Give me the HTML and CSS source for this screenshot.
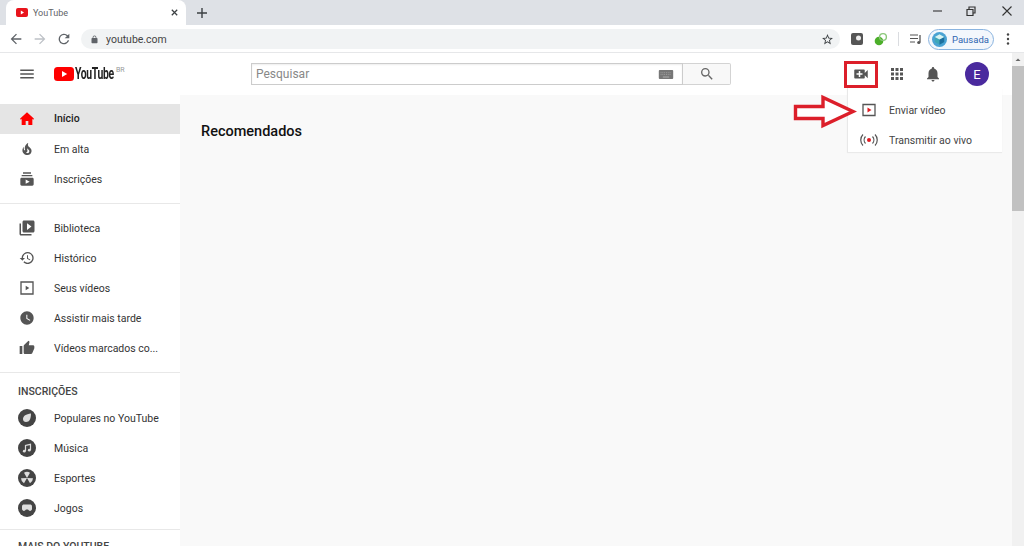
FILE: index.html
```html
<!DOCTYPE html>
<html lang="pt-BR">
<head>
<meta charset="utf-8">
<title>YouTube</title>
<link rel="stylesheet" href="styles.css">
</head>
<body>
<div class="browser">
  <div class="tabstrip">
    <div class="tab">
      <svg class="favicon" viewBox="0 0 12 9"><rect width="12" height="9" rx="2" fill="#e8141c"/><path d="M4.800 2.400 8 4.500 4.800 6.600z" fill="#fff"/></svg>
      <span class="tab-title">YouTube</span>
      <svg class="tab-close" viewBox="0 0 10 10"><path d="M2 2l6 6M8 2 2 8" stroke="#3c4043" stroke-width="1.400"/></svg>
    </div>
    <svg class="new-tab" viewBox="0 0 10 10"><path d="M5 0v10M0 5h10" stroke="#3c4043" stroke-width="1.400"/></svg>
    <div class="win-controls">
      <svg class="win-btn" viewBox="0 0 12 12"><path d="M1 6h9" stroke="#333" stroke-width="1.100"/></svg>
      <svg class="win-btn" viewBox="0 0 12 12"><path d="M2 4.500h6v6H2zM4 4.500V2h6v6H8" fill="none" stroke="#333" stroke-width="1.200"/></svg>
      <svg class="win-btn win-close" viewBox="0 0 12 12"><path d="M1.500 1.500l9 9M10.500 1.500l-9 9" stroke="#333" stroke-width="1.100"/></svg>
    </div>
  </div>
  <div class="toolbar">
    <svg class="nav-icon" viewBox="0 0 24 24"><path d="M20 11H7.800l5.600-5.600L12 4l-8 8 8 8 1.400-1.400L7.800 13H20z" fill="#5f6368"/></svg>
    <svg class="nav-icon" viewBox="0 0 24 24"><path d="M4 11h12.200l-5.600-5.600L12 4l8 8-8 8-1.400-1.400 5.600-5.600H4z" fill="#bdc1c6"/></svg>
    <svg class="nav-icon" viewBox="0 0 24 24"><path d="M17.650 6.350A8 8 0 1 0 19.730 14h-2.080A6 6 0 1 1 12 6c1.660 0 3.140.69 4.220 1.780L13 11h7V4z" fill="#5f6368"/></svg>
    <div class="omnibox">
      <svg class="lock" viewBox="0 0 24 24"><path d="M18 8h-1V6a5 5 0 0 0-10 0v2H6a2 2 0 0 0-2 2v10c0 1.100.9 2 2 2h12a2 2 0 0 0 2-2V10a2 2 0 0 0-2-2zM9 6a3 3 0 0 1 6 0v2H9z" fill="#5f6368"/></svg>
      <span class="url">youtube.com</span>
      <svg class="star" viewBox="0 0 24 24"><path d="M22 9.240l-7.190-.62L12 2 9.190 8.630 2 9.240l5.460 4.730L5.820 21 12 17.270 18.180 21l-1.630-7.030zM12 15.400l-3.760 2.270 1-4.280-3.320-2.880 4.380-.38L12 6.100l1.710 4.040 4.380.38-3.320 2.880 1 4.280z" fill="#3c4043"/></svg>
    </div>
    <div class="extensions">
      <svg class="ext" viewBox="0 0 14 14"><rect x="1" y="1" width="12" height="12" rx="2" fill="#555"/><circle cx="8.500" cy="6" r="2.500" fill="#eee"/></svg>
      <svg class="ext" viewBox="0 0 14 14"><circle cx="5" cy="9" r="4.300" fill="#4caf2a"/><circle cx="9" cy="5" r="3.400" fill="none" stroke="#8bc77a" stroke-width="1.400"/></svg>
      <span class="tb-sep"></span>
      <svg class="ext" viewBox="0 0 14 14"><path d="M1 3h8M1 6.500h8M1 10h5" stroke="#555" stroke-width="1.200"/><path d="M11 3v7.500" stroke="#555" stroke-width="1.300"/><circle cx="9.800" cy="10.500" r="1.600" fill="#555"/></svg>
    </div>
    <div class="profile-chip">
      <svg class="cube" viewBox="0 0 16 16"><circle cx="8" cy="8" r="8" fill="#4aa3d4"/><path d="M8 2.500l5 2.800v5.400l-5 2.800-5-2.800V5.300z" fill="#3fa7b8"/><path d="M8 8v5.500l5-2.800V5.300z" fill="#1d6f9e"/><path d="M8 2.500l5 2.800L8 8 3 5.300z" fill="#d8f3f3"/></svg>
      <span class="chip-label">Pausada</span>
    </div>
    <svg class="menu-dots" viewBox="0 0 4 14"><circle cx="2" cy="2.500" r="1.200" fill="#444"/><circle cx="2" cy="7" r="1.200" fill="#444"/><circle cx="2" cy="11.500" r="1.200" fill="#444"/></svg>
  </div>
</div>

<div class="page">
  <div class="app">
    <header class="masthead">
      <div class="mast-left">
        <svg class="mast-icon" viewBox="0 0 24 24"><path d="M3 6h18v2H3zM3 11h18v2H3zM3 16h18v2H3z" fill="#555"/></svg>
        <div class="logo">
          <svg class="logo-mark" viewBox="0 0 20 14"><rect width="20" height="14" rx="3.500" fill="#f00"/><path d="M8 4l5.200 3L8 10z" fill="#fff"/></svg>
          <span class="logo-text">YouTube</span>
          <span class="logo-br">BR</span>
        </div>
      </div>
      <div class="search">
        <div class="search-input">
          <span class="placeholder">Pesquisar</span>
          <svg class="keyboard" viewBox="0 0 16 10"><rect width="16" height="10" rx="1" fill="#777"/><path d="M2 3h12M2 5h12" stroke="#aaa" stroke-width=".8" stroke-dasharray="1 1"/><path d="M4.500 7.800h7" stroke="#bbb" stroke-width=".9"/></svg>
        </div>
        <div class="search-btn">
          <svg class="search-icon" viewBox="0 0 24 24"><path d="M15.500 14h-.79l-.28-.27A6.470 6.470 0 0 0 16 9.500 6.500 6.500 0 1 0 9.500 16c1.610 0 3.090-.59 4.230-1.570l.27.28v.79l5 4.990L20.490 19zm-6 0a4.500 4.500 0 1 1 0-9 4.500 4.500 0 0 1 0 9z" fill="#666"/></svg>
        </div>
      </div>
      <div class="mast-right">
        <svg class="mast-icon" viewBox="0 0 24 24"><path d="M17 10.500V7c0-.55-.45-1-1-1H4c-.55 0-1 .45-1 1v10c0 .55.45 1 1 1h12c.55 0 1-.45 1-1v-3.500l4 4v-11l-4 4zM14 13h-3v3H9v-3H6v-2h3V8h2v3h3v2z" fill="#555"/></svg>
        <svg class="mast-icon" viewBox="0 0 24 24"><path d="M4 8h4V4H4zm6 12h4v-4h-4zm-6 0h4v-4H4zm0-6h4v-4H4zm6 0h4v-4h-4zm6-10v4h4V4zm-6 4h4V4h-4zm6 6h4v-4h-4zm0 6h4v-4h-4z" fill="#555"/></svg>
        <svg class="mast-icon" viewBox="0 0 24 24"><path d="M12 22c1.100 0 2-.9 2-2h-4c0 1.100.89 2 2 2zm6-6v-5c0-3.070-1.640-5.640-4.500-6.320V4c0-.83-.67-1.500-1.500-1.500s-1.500.67-1.500 1.500v.68C7.630 5.360 6 7.920 6 11v5l-2 2v1h16v-1l-2-2z" fill="#555"/></svg>
        <div class="avatar">E</div>
      </div>
    </header>
    <div class="body-row">
      <nav class="sidebar">
        <section class="side-section">
          <a class="side-item active"><svg class="side-icon" viewBox="0 0 24 24"><path d="M4 10v11h6v-6h4v6h6V10l-8-7z" fill="#f00"/><path d="M1.500 11.500 12 2l10.500 9.500-1.300 1.500L12 4.800 2.800 13z" fill="#f00"/></svg><span class="side-label">Início</span></a>
          <a class="side-item"><svg class="side-icon" viewBox="0 0 24 24"><path d="M17.530 11.200c-.23-.3-.5-.56-.76-.82-.65-.6-1.400-1.030-2.030-1.660C13.300 7.260 13 4.850 13.910 3c-.91.23-1.750.75-2.450 1.320-2.540 2.080-3.540 5.750-2.340 8.900.04.1.08.2.08.33 0 .22-.15.42-.35.5-.22.1-.46.04-.64-.12-.06-.05-.1-.1-.15-.17-1.100-1.430-1.280-3.480-.53-5.120C5.890 10 5 12.300 5.140 14.470c.04.5.1 1 .27 1.500.14.6.4 1.200.72 1.730 1.040 1.730 2.870 2.970 4.840 3.220 2.100.27 4.350-.12 5.960-1.600 1.800-1.660 2.450-4.320 1.500-6.600l-.13-.26c-.2-.46-.47-.87-.8-1.250zM14.500 17.500c-.28.24-.73.5-1.080.6-1.100.4-2.200-.16-2.870-.82 1.190-.28 1.890-1.160 2.090-2.050.17-.8-.14-1.460-.27-2.230-.12-.74-.1-1.370.17-2.060.19.38.39.76.63 1.060.77 1 1.980 1.440 2.240 2.800.04.14.06.28.06.43.03.82-.33 1.720-.97 2.270z" fill="#555"/></svg><span class="side-label">Em alta</span></a>
          <a class="side-item"><svg class="side-icon" viewBox="0 0 24 24"><path d="M20 8H4V6h16v2zm-2-6H6v2h12V2zm4 10v8c0 1.100-.9 2-2 2H4c-1.100 0-2-.9-2-2v-8c0-1.100.9-2 2-2h16c1.100 0 2 .9 2 2zm-6 4l-6-3.270v6.530L16 16z" fill="#555"/></svg><span class="side-label">Inscrições</span></a>
        </section>
        <section class="side-section">
          <a class="side-item"><svg class="side-icon large" viewBox="0 0 24 24"><path d="M4 6H2v14c0 1.100.9 2 2 2h14v-2H4V6zm16-4H8c-1.100 0-2 .9-2 2v12c0 1.100.9 2 2 2h12c1.100 0 2-.9 2-2V4c0-1.100-.9-2-2-2zm-8 12.500v-9l6 4.500-6 4.500z" fill="#555"/></svg><span class="side-label">Biblioteca</span></a>
          <a class="side-item"><svg class="side-icon" viewBox="0 0 24 24"><path d="M13 3c-4.970 0-9 4.030-9 9H1l3.890 3.890.07.14L9 12H6c0-3.870 3.130-7 7-7s7 3.130 7 7-3.130 7-7 7c-1.930 0-3.680-.79-4.940-2.060l-1.420 1.420C8.270 19.990 10.510 21 13 21c4.970 0 9-4.030 9-9s-4.030-9-9-9zm-1 5v5l4.280 2.540.72-1.210-3.500-2.080V8H12z" fill="#555"/></svg><span class="side-label">Histórico</span></a>
          <a class="side-item"><svg class="side-icon" viewBox="0 0 24 24"><path d="M3 3h18v18H3z" fill="none" stroke="#555" stroke-width="2"/><path d="M10 8.500v7l5.500-3.500z" fill="#555"/></svg><span class="side-label">Seus vídeos</span></a>
          <a class="side-item"><svg class="side-icon" viewBox="0 0 24 24"><path d="M12 2C6.500 2 2 6.500 2 12s4.500 10 10 10 10-4.500 10-10S17.500 2 12 2zm4.200 14.200L11 13V7h1.500v5.200l4.500 2.700-.8 1.300z" fill="#555"/></svg><span class="side-label">Assistir mais tarde</span></a>
          <a class="side-item"><svg class="side-icon" viewBox="0 0 24 24"><path d="M1 21h4V9H1v12zm22-11c0-1.100-.9-2-2-2h-6.310l.95-4.570.03-.32c0-.41-.17-.79-.44-1.060L14.170 1 7.590 7.590C7.220 7.950 7 8.450 7 9v10c0 1.100.9 2 2 2h9c.83 0 1.540-.5 1.840-1.220l3.020-7.050c.09-.23.14-.47.14-.73v-2z" fill="#555"/></svg><span class="side-label">Vídeos marcados co...</span></a>
        </section>
        <section class="side-section subs">
          <h3 class="side-heading">INSCRIÇÕES</h3>
          <a class="side-item"><svg class="side-icon large" viewBox="0 0 18 18"><circle cx="9" cy="9" r="9" fill="#444"/><path d="M5 10c0-3 3-5 8-5.500 0 5-1.500 8.500-5 8.500-1.800 0-3-1.200-3-3z" fill="#ddd"/></svg><span class="side-label">Populares no YouTube</span></a>
          <a class="side-item"><svg class="side-icon large" viewBox="0 0 18 18"><circle cx="9" cy="9" r="9" fill="#444"/><path d="M7.500 12V6.500l5-1.200V11" fill="none" stroke="#ddd" stroke-width="1.200"/><circle cx="6.300" cy="12.200" r="1.400" fill="#ddd"/><circle cx="11.300" cy="11.200" r="1.400" fill="#ddd"/></svg><span class="side-label">Música</span></a>
          <a class="side-item"><svg class="side-icon large" viewBox="0 0 18 18"><circle cx="9" cy="9" r="9" fill="#444"/><path d="M9 9 6 3.700a6 6 0 0 1 6 0zM9 9l6 .3a6 6 0 0 1-3 5zM9 9l-3 5.300a6 6 0 0 1-3-5z" fill="#ddd"/></svg><span class="side-label">Esportes</span></a>
          <a class="side-item"><svg class="side-icon large" viewBox="0 0 18 18"><circle cx="9" cy="9" r="9" fill="#444"/><path d="M4 7.500C4 6 5 5.500 6 5.500h6c1 0 2 .5 2 2V10c0 1.500-2 2.500-3 1.500L10 10.500H8L7 11.500C6 12.500 4 11.500 4 10z" fill="#ddd"/></svg><span class="side-label">Jogos</span></a>
        </section>
        <section class="side-section last">
          <h3 class="side-heading">MAIS DO YOUTUBE</h3>
        </section>
      </nav>
      <main class="feed">
        <h2 class="feed-title">Recomendados</h2>
      </main>
    </div>
    <div class="highlight-box"></div>
    <div class="upload-menu">
      <div class="menu-row"><svg class="menu-icon" viewBox="0 0 18 18"><path d="M3 3.500h12v11H3z" fill="none" stroke="#555" stroke-width="1.300"/><path d="M7.500 6.500v5l4-2.500z" fill="#e01b22"/></svg><span class="menu-label">Enviar vídeo</span></div>
      <div class="menu-row"><svg class="menu-icon" viewBox="0 0 18 18"><circle cx="9" cy="9" r="2" fill="#e01b22"/><path d="M5.500 5.500c-1.800 2-1.800 5 0 7M12.500 5.500c1.800 2 1.800 5 0 7M3 3.500c-3 3-3 8 0 11M15 3.500c3 3 3 8 0 11" fill="none" stroke="#555" stroke-width="1.200"/></svg><span class="menu-label">Transmitir ao vivo</span></div>
    </div>
    <svg class="callout-arrow" viewBox="0 0 64 36"><path d="M2.500 12.500H30V3.500L60 17.500 30 31.500V24.500H2.500z" fill="#fff" stroke="#dc1f2a" stroke-width="3.400"/></svg>
  </div>
  <div class="scrollbar">
    <svg class="scroll-arrow" viewBox="0 0 12 13"><path d="M3.500 8 6 5.500 8.500 8z" fill="#666"/></svg>
    <div class="scroll-thumb"></div>
  </div>
</div>
</body>
</html>
```

FILE: styles.css
```css
* { box-sizing: border-box; }
html, body { margin: 0; height: 546px; overflow: hidden; }
body { font-family: Roboto, "Liberation Sans", sans-serif; background: #fff; color: #333; display: flex; flex-direction: column; filter: blur(.35px); }

.browser { flex: none; }
.tabstrip { height: 25px; background: #dee1e6; display: flex; align-items: flex-end; padding-left: 6px; }
.tab { width: 180px; height: 25px; background: #fff; border-radius: 8px 8px 0 0; display: flex; align-items: center; padding-left: 10px; }
.favicon { width: 12px; height: 9px; flex: none; }
.tab-title { font-size: 9px; color: #5f6368; margin-left: 5px; flex: 1; }
.tab-close { width: 9px; height: 9px; margin-right: 7px; }
.new-tab { width: 10px; height: 10px; margin: 0 0 7px 11px; }
.win-controls { margin-left: auto; display: flex; align-items: center; height: 25px; gap: 21px; padding: 0 11px 4px 0; }
.win-btn { width: 12px; height: 12px; }
.win-close { margin-left: 3px; }

.toolbar { height: 28px; background: #fff; border-bottom: 1px solid #e6e7e9; display: flex; align-items: center; padding: 1px 0 0 8px; }
.nav-icon { width: 16px; height: 16px; margin-right: 8px; flex: none; }
.omnibox { width: 759px; height: 20px; margin-left: 1px; background: #f1f3f4; border-radius: 10px; display: flex; align-items: center; padding: 0 6px 0 9px; }
.lock { width: 9px; height: 9px; }
.url { font-size: 10.500px; color: #444; margin-left: 7px; flex: 1; }
.star { width: 13px; height: 13px; }
.extensions { display: flex; align-items: center; margin-left: 10px; }
.ext { width: 14px; height: 14px; margin-right: 10px; }
.tb-sep { width: 1px; height: 14px; background: #dadce0; margin: 0 10px 0 0; }
.profile-chip { width: 66px; height: 21px; border: 1px solid #8ab4e0; border-radius: 11px; background: #f3f7fc; display: flex; align-items: center; padding-left: 3px; margin-left: -5px; }
.cube { width: 15px; height: 15px; flex: none; }
.chip-label { font-size: 9.500px; color: #2f66b0; margin-left: 5px; }
.menu-dots { width: 4px; height: 14px; margin-left: 12px; }

.page { flex: 1; display: flex; min-height: 0; }
.app { flex: 1; position: relative; display: flex; flex-direction: column; min-width: 0; }
.masthead { height: 42px; flex: none; background: #fff; display: flex; align-items: center; padding-left: 18px; }
.mast-left { width: 233px; display: flex; align-items: center; }
.mast-icon { width: 18px; height: 18px; flex: none; }
.logo { display: flex; align-items: flex-start; margin-left: 18px; }
.logo-mark { width: 20px; height: 14px; }
.logo-text { font-size: 16px; font-weight: 700; color: #222; width: 40px; margin-left: 1px; line-height: 14px; letter-spacing: -.5px; display: inline-block; transform: scaleX(.65); transform-origin: left center; white-space: nowrap; }
.logo-br { font-size: 7px; line-height: 8px; color: #999; margin-left: 1px; margin-top: -1px; }
.search { display: flex; width: 480px; height: 22px; }
.search-input { width: 432px; border: 1px solid #ccc; background: #fff; display: flex; align-items: center; padding: 0 8px 0 4px; justify-content: space-between; box-shadow: inset 0 1px 2px #eee; }
.placeholder { font-size: 12px; color: #888; }
.keyboard { width: 16px; height: 9px; }
.search-btn { width: 48px; background: #f8f8f8; border: 1px solid #d3d3d3; border-left: 0; border-radius: 0 2px 2px 0; display: flex; align-items: center; justify-content: center; }
.search-icon { width: 16px; height: 16px; }
.mast-right { margin-left: auto; display: flex; align-items: center; gap: 18px; padding-right: 23px; }
.avatar { width: 24px; height: 24px; border-radius: 50%; background: #4a2a9e; color: #fff; font-size: 13px; display: flex; align-items: center; justify-content: center; margin-left: 5px; }

.body-row { flex: 1; display: flex; min-height: 0; }
.sidebar { width: 180px; flex: none; background: #fff; overflow: hidden; }
.side-section { padding: 9px 0; border-bottom: 1px solid #e8e8e8; }
.side-section.subs { padding: 0 0 6px; }
.side-section.last { border: 0; padding: 0; }
.side-item { height: 30px; display: flex; align-items: center; padding-left: 18px; gap: 18px; }
.side-item.active { background: #e5e5e5; }
.side-item.active .side-label { font-weight: 500; color: #222; line-height: 29px; height: 30px; }
.side-icon { width: 16px; height: 16px; margin: 0 1px; flex: none; }
.side-icon.large { width: 18px; height: 18px; margin: 0; }
.side-label { font-size: 10.500px; color: #333; white-space: nowrap; }
.side-heading { margin: 0; height: 30px; line-height: 37px; padding-left: 18px; font-size: 10.500px; font-weight: 500; color: #444; }
.side-section.last .side-heading { height: 16px; line-height: 33px; overflow: hidden; }
.feed { flex: 1; background: #f9f9f9; padding: 27px 0 0 21px; }
.feed-title { margin: 0; font-size: 14.500px; line-height: 19px; font-weight: 500; color: #111; }

.highlight-box { position: absolute; left: 844px; top: 8px; width: 34px; height: 27px; border: 3px solid #dc1f2a; }
.upload-menu { position: absolute; left: 847px; top: 35px; width: 155px; height: 64px; background: #fff; border-left: 1px solid #e8e8e8; box-shadow: 0 1px 1px rgba(0,0,0,.06); padding-top: 7px; }
.menu-row { height: 30px; display: flex; align-items: center; padding-left: 12px; gap: 11px; }
.menu-icon { width: 18px; height: 18px; flex: none; }
.menu-label { font-size: 10.500px; color: #444; white-space: nowrap; }
.callout-arrow { position: absolute; left: 793px; top: 41px; width: 64px; height: 36px; }

.scrollbar { width: 12px; flex: none; background: #f1f1f1; }
.scroll-arrow { display: block; width: 12px; height: 13px; }
.scroll-thumb { height: 145px; background: #c1c1c1; }
```
